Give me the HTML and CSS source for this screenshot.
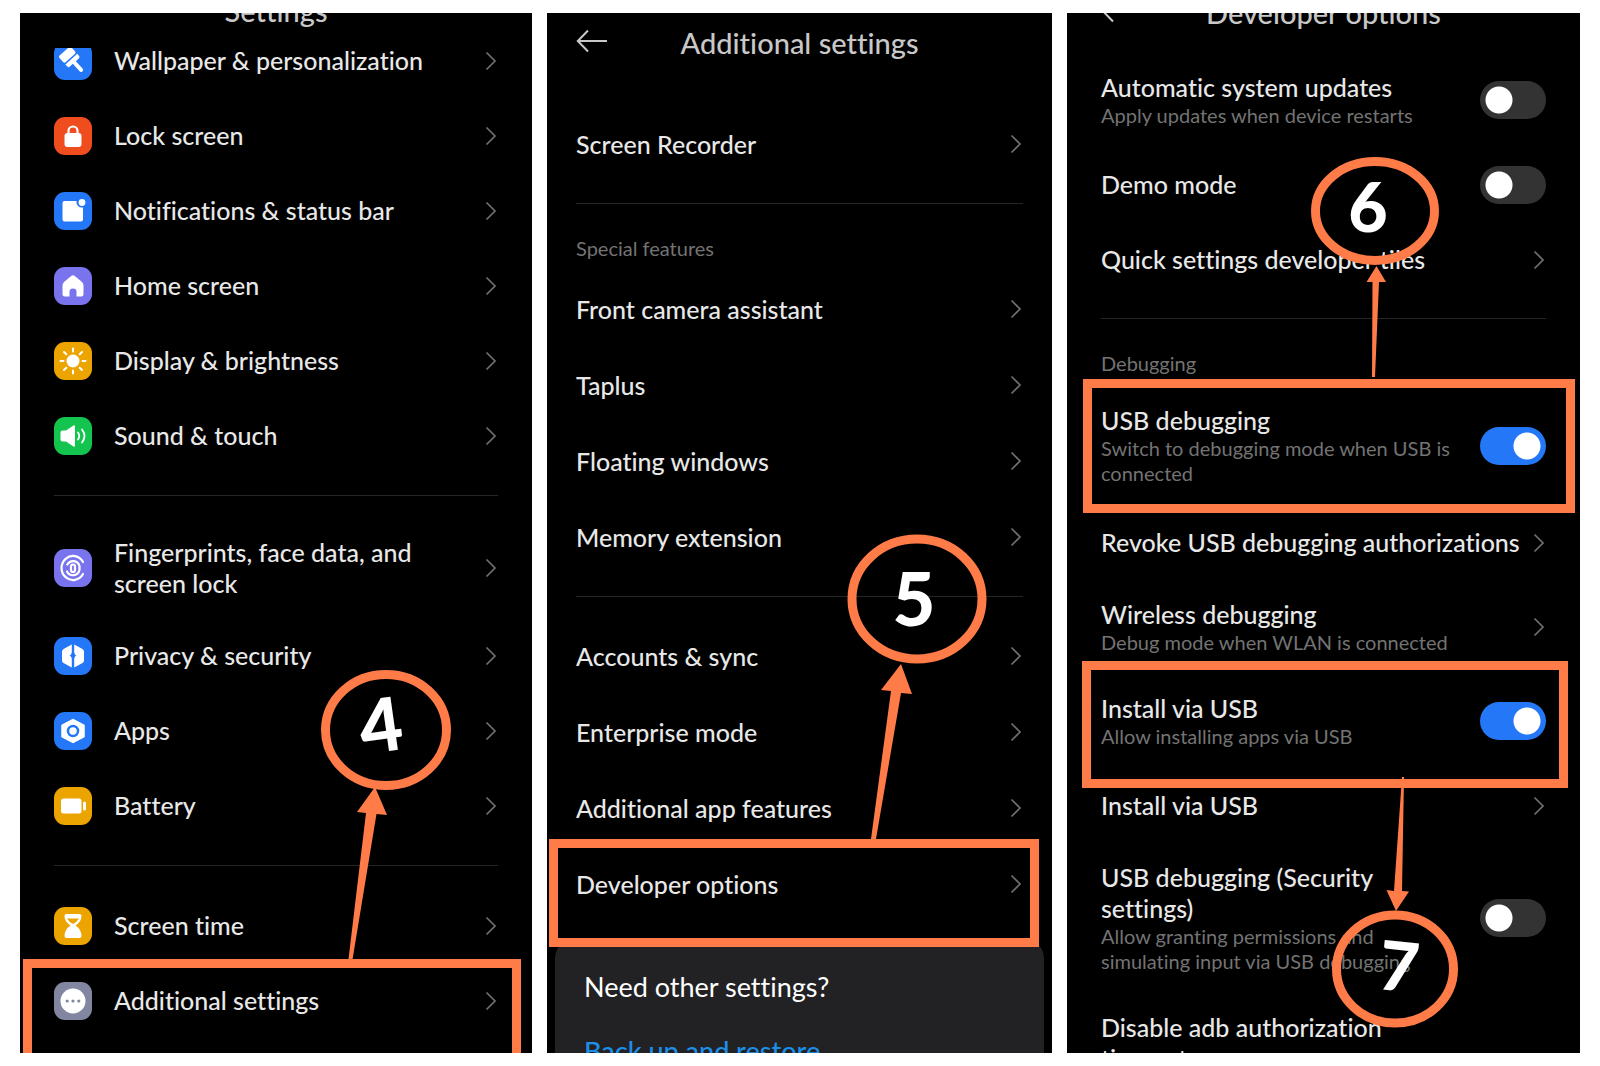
FILE: index.html
```html
<!DOCTYPE html>
<html lang="en">
<head>
<meta charset="utf-8">
<meta name="viewport" content="width=device-width, initial-scale=1">
<title>Enable USB debugging: steps 4 to 7</title>
<link rel="stylesheet" href="styles.css">
</head>
<body>
<svg class="defs" aria-hidden="true">
  <symbol id="chevron" viewBox="0 0 12 20"><path d="M1.5 1.5 10 10 1.5 18.5" fill="none" stroke="currentColor" stroke-width="1.7"/></symbol>
  <symbol id="back" viewBox="0 0 32 24"><path d="M31 12H2M12 1.500 1.800 12 12 22.500" fill="none" stroke="currentColor" stroke-width="2"/></symbol>
</svg>
<main class="board">

  <section class="phone phone-settings">
    <header class="bar"><h1 class="bar-title">Settings</h1></header>
    <nav class="list">
      <a class="row" href="#"><span class="icon blue"><svg viewBox="0 0 38 38"><g transform="translate(19 19) rotate(-42)" fill="#fff"><rect x="-8" y="-13" width="16" height="9" rx="2"/><path d="M-8-2.500H8V0Q8 2 6 2H2V12Q2 14 0 14T-2 12V2H-6Q-8 2-8 0Z"/></g></svg></span><span class="label">Wallpaper &amp; personalization</span><svg class="chevron"><use href="#chevron"/></svg></a>
      <a class="row" href="#"><span class="icon red"><svg viewBox="0 0 38 38"><rect x="10.500" y="16" width="17" height="14" rx="3" fill="#fff"/><path d="M14.500 17V14a4.500 4.500 0 0 1 9 0v3" fill="none" stroke="#fff" stroke-width="2.200"/></svg></span><span class="label">Lock screen</span><svg class="chevron"><use href="#chevron"/></svg></a>
      <a class="row" href="#"><span class="icon blue"><svg viewBox="0 0 38 38"><path d="M10.500 9H22.500A5.600 5.600 0 0 0 29 15.500V27.500Q29 29.500 27 29.500H10.500Q8.500 29.500 8.500 27.500V11Q8.500 9 10.500 9Z" fill="#fff"/><circle cx="28" cy="10.500" r="3.400" fill="#fff"/></svg></span><span class="label">Notifications &amp; status bar</span><svg class="chevron"><use href="#chevron"/></svg></a>
      <a class="row" href="#"><span class="icon violet"><svg viewBox="0 0 38 38"><path d="M17.500 8.700Q19 7.700 20.500 8.700L28 15Q29.500 16.500 29.500 18.500V27Q29.500 29.500 27 29.500H22.500V24.500Q22.500 21.500 19 21.500T15.500 24.500V29.500H11Q8.500 29.500 8.500 27V18.500Q8.500 16.500 10 15Z" fill="#fff"/></svg></span><span class="label">Home screen</span><svg class="chevron"><use href="#chevron"/></svg></a>
      <a class="row" href="#"><span class="icon amber"><svg viewBox="0 0 38 38"><circle cx="19" cy="19" r="6.500" fill="#fff"/><path d="M19 6.500V9.500M19 28.500V31.500M6.500 19H9.500M28.500 19H31.500M10 10 12.300 12.300M25.700 25.700 28 28M28 10 25.700 12.300M10 28 12.300 25.700" stroke="#fff" stroke-width="2" stroke-linecap="round"/></svg></span><span class="label">Display &amp; brightness</span><svg class="chevron"><use href="#chevron"/></svg></a>
      <a class="row" href="#"><span class="icon green"><svg viewBox="0 0 38 38"><path d="M6.500 15.500Q6.500 13.500 8.500 13.500H12L19.500 8.500Q21 7.800 21 9.500V28.500Q21 30.200 19.500 29.500L12 24.500H8.500Q6.500 24.500 6.500 22.500Z" fill="#fff"/><path d="M24 15.500Q26.500 19 24 22.500M28 12.500Q33 19 28 25.500" fill="none" stroke="#fff" stroke-width="1.800" stroke-linecap="round"/></svg></span><span class="label">Sound &amp; touch</span><svg class="chevron"><use href="#chevron"/></svg></a>
      <hr class="rule">
      <a class="row" href="#"><span class="icon violet"><svg viewBox="0 0 38 38" fill="none" stroke="#fff" stroke-width="2.200" stroke-linecap="round"><path d="M29 13A11.500 12 0 1 0 29 25"/><path d="M13.300 15.500A6.800 7.200 0 0 1 25.500 17V21A6.800 7.200 0 0 1 13 22.500"/><rect x="17" y="15.500" width="4" height="7.500" rx="2"/></svg></span><span class="label">Fingerprints, face data, and<br>screen lock</span><svg class="chevron"><use href="#chevron"/></svg></a>
      <a class="row" href="#"><span class="icon blue"><svg viewBox="0 0 38 38"><path d="M17.800 7.500V15.500Q17.300 18 15.500 18.500 17.300 19 17.800 21.500V30.500L9.500 26Q8 25 8 23.500V14.500Q8 13 9.500 12ZM20.200 7.500V15.500Q20.700 18 22.500 18.500 20.700 19 20.200 21.500V30.500L28.500 26Q30 25 30 23.500V14.500Q30 13 28.500 12Z" fill="#fff"/></svg></span><span class="label">Privacy &amp; security</span><svg class="chevron"><use href="#chevron"/></svg></a>
      <a class="row" href="#"><span class="icon blue"><svg viewBox="0 0 38 38"><path d="M19 8 29.500 13.500V24.500L19 30 8.500 24.500V13.500Z" fill="#fff" stroke="#fff" stroke-width="2.500" stroke-linejoin="round"/><circle cx="19" cy="19" r="5" fill="#fff" stroke="#2477f6" stroke-width="2.500"/></svg></span><span class="label">Apps</span><svg class="chevron"><use href="#chevron"/></svg></a>
      <a class="row" href="#"><span class="icon amber"><svg viewBox="0 0 38 38" fill="#fff"><rect x="7" y="11.500" width="20.500" height="15" rx="2.500"/><rect x="29" y="14.500" width="3" height="9" rx="1.500"/></svg></span><span class="label">Battery</span><svg class="chevron"><use href="#chevron"/></svg></a>
      <hr class="rule">
      <a class="row" href="#"><span class="icon amber"><svg viewBox="0 0 38 38" fill="#fff"><path fill-rule="evenodd" d="M12.500 7H25.500Q27.500 7 27.500 9 27.500 14.500 21.500 18.500 27.500 22.500 27.500 29 27.500 31 25.500 31H12.500Q10.500 31 10.500 29 10.500 22.500 16.500 18.500 10.500 14.500 10.500 9 10.500 7 12.500 7ZM13 11.500Q15 15 19 17 23 15 25 11.500Z"/></svg></span><span class="label">Screen time</span><svg class="chevron"><use href="#chevron"/></svg></a>
      <a class="row" href="#"><span class="icon slate"><svg viewBox="0 0 38 38"><circle cx="19" cy="19" r="12.500" fill="#fff"/><g fill="#8386a0"><circle cx="13.200" cy="19" r="1.600"/><circle cx="19" cy="19" r="1.600"/><circle cx="24.800" cy="19" r="1.600"/></g></svg></span><span class="label">Additional settings</span><svg class="chevron"><use href="#chevron"/></svg></a>
    </nav>
    <svg class="marks">
      <rect x="7.500" y="950.500" width="489" height="120"/>
      <ellipse cx="366" cy="717" rx="60.500" ry="55.500"/>
      <path d="M355 774 367 802 356.500 801 332.600 946H328.500L346 800 337 799Z"/>
      <text x="361" y="739" transform="rotate(-8 361 713)">4</text>
    </svg>
  </section>

  <section class="phone phone-additional">
    <header class="bar"><button class="back" type="button" aria-label="Back"><svg><use href="#back"/></svg></button><h1 class="bar-title">Additional settings</h1></header>
    <nav class="list">
      <a class="row" href="#"><span class="label">Screen Recorder</span><svg class="chevron"><use href="#chevron"/></svg></a>
      <hr class="rule">
      <h2 class="group">Special features</h2>
      <a class="row" href="#"><span class="label">Front camera assistant</span><svg class="chevron"><use href="#chevron"/></svg></a>
      <a class="row" href="#"><span class="label">Taplus</span><svg class="chevron"><use href="#chevron"/></svg></a>
      <a class="row" href="#"><span class="label">Floating windows</span><svg class="chevron"><use href="#chevron"/></svg></a>
      <a class="row" href="#"><span class="label">Memory extension</span><svg class="chevron"><use href="#chevron"/></svg></a>
      <hr class="rule">
      <a class="row" href="#"><span class="label">Accounts &amp; sync</span><svg class="chevron"><use href="#chevron"/></svg></a>
      <a class="row" href="#"><span class="label">Enterprise mode</span><svg class="chevron"><use href="#chevron"/></svg></a>
      <a class="row" href="#"><span class="label">Additional app features</span><svg class="chevron"><use href="#chevron"/></svg></a>
      <a class="row" href="#"><span class="label">Developer options</span><svg class="chevron"><use href="#chevron"/></svg></a>
    </nav>
    <aside class="card">
      <p class="card-title">Need other settings?</p>
      <a class="card-link" href="#">Back up and restore</a>
    </aside>
    <svg class="marks">
      <rect x="6.500" y="830.500" width="481" height="99"/>
      <ellipse cx="370" cy="586" rx="65" ry="60"/>
      <path d="M354 651 365 681 354 680 329 826H324L344 678 334 677Z"/>
      <text x="367" y="613">5</text>
    </svg>
  </section>

  <section class="phone phone-developer">
    <header class="bar"><button class="back" type="button" aria-label="Back"><svg><use href="#back"/></svg></button><h1 class="bar-title">Developer options</h1></header>
    <div class="list">
      <label class="row"><span class="label">Automatic system updates<small class="note">Apply updates when device restarts</small></span><input class="switch" type="checkbox"></label>
      <label class="row"><span class="label">Demo mode</span><input class="switch" type="checkbox"></label>
      <a class="row" href="#"><span class="label">Quick settings developer tiles</span><svg class="chevron"><use href="#chevron"/></svg></a>
      <hr class="rule">
      <h2 class="group">Debugging</h2>
      <label class="row"><span class="label">USB debugging<small class="note">Switch to debugging mode when USB is<br>connected</small></span><input class="switch" type="checkbox" checked></label>
      <a class="row" href="#"><span class="label">Revoke USB debugging authorizations</span><svg class="chevron"><use href="#chevron"/></svg></a>
      <a class="row" href="#"><span class="label">Wireless debugging<small class="note">Debug mode when WLAN is connected</small></span><svg class="chevron"><use href="#chevron"/></svg></a>
      <label class="row"><span class="label">Install via USB<small class="note">Allow installing apps via USB</small></span><input class="switch" type="checkbox" checked></label>
      <a class="row" href="#"><span class="label">Install via USB</span><svg class="chevron"><use href="#chevron"/></svg></a>
      <label class="row"><span class="label">USB debugging (Security<br>settings)<small class="note">Allow granting permissions and<br>simulating input via USB debugging</small></span><input class="switch" type="checkbox"></label>
      <a class="row" href="#"><span class="label">Disable adb authorization<br>timeout</span></a>
    </div>
    <svg class="marks">
      <rect x="20.500" y="370.500" width="483" height="125"/>
      <rect x="19.500" y="652.500" width="477" height="118"/>
      <ellipse cx="308" cy="198" rx="59.500" ry="49.500"/>
      <path d="M309.500 253 319 269H312L308 364H305L305.500 269H299.500Z"/>
      <text class="small" x="301" y="219">6</text>
      <path d="M335 764H337L335 878 342 878.500 329 898 319.500 877 327 878Z"/>
      <ellipse cx="328" cy="956" rx="58.500" ry="54"/>
      <text class="small" x="332" y="978" transform="rotate(6 332 954)">7</text>
    </svg>
  </section>
</main>
</body>
</html>
```
FILE: styles.css
```css
* { box-sizing: border-box; }

body {
  margin: 0;
  background: #fff;
  color: #e8e8e8;
  font-family: Lato, "Noto Sans", sans-serif;
  font-size: 25px;
  font-weight: 500;
  font-variant-ligatures: none;
  line-height: 31px;
}

.defs { display: none; }

.board {
  display: grid;
  grid-template-columns: 512fr 505fr 513fr;
  gap: 15px;
  height: 100vh;
  padding: 13px 20px;
}

.phone {
  --edge: 34px;
  --row: 75px;
  --rule: 21px;
  position: relative;
  display: flex;
  flex-direction: column;
  min-width: 0;
  overflow: hidden;
  background: #000;
}

.phone-settings { --rule: 22px; }
.phone-additional { --edge: 29px; --row: 76px; }

/* Title bar */
.bar {
  display: grid;
  grid-template-columns: 32px 1fr 32px;
  align-items: center;
  flex: none;
  height: 60px;
  padding: 0 var(--edge);
}

.phone-settings .bar { margin: -33px 0 8px; }
.phone-additional .bar { margin: -1px 0 34px; }
.phone-developer .bar { margin: -31px 0 11px; }

.bar-title {
  grid-column: 2;
  margin: 0;
  color: #c8c8c8;
  font-size: 29px;
  font-weight: 500;
  text-align: center;
}

.back {
  padding: 0 0 2px;
  border: 0;
  background: none;
  color: #c8c8c8;
}

.back svg { display: block; width: 32px; height: 24px; }

/* Rows */
.list {
  flex: none;
  padding: 0 var(--edge);
}

.phone-settings .list { overflow: hidden; }
.phone-settings .row:first-child { margin-top: -25px; }

.row {
  display: flex;
  align-items: center;
  gap: 22px;
  min-height: var(--row);
  color: inherit;
  text-decoration: none;
}

.label {
  flex: 1;
  padding: 19px 0;
  white-space: nowrap;
}

.note {
  display: block;
  color: #737373;
  font-size: 20px;
  font-weight: 400;
  line-height: 25px;
}

.chevron {
  flex: none;
  width: 12px;
  height: 20px;
  margin-right: 1px;
  color: #707070;
}

.phone-developer .chevron { margin-left: -22px; }

.rule {
  height: 1px;
  margin: var(--rule) 0;
  border: 0;
  background: #262626;
}

.group {
  margin: 0;
  color: #737373;
  font-size: 20px;
  font-weight: 400;
  line-height: 46px;
}

/* App icons */
.icon {
  flex: none;
  width: 38px;
  height: 38px;
  border-radius: 11px;
}

.icon svg { display: block; width: 38px; height: 38px; }

.blue { background: #2477f6; }
.red { background: #f04d1f; }
.violet { background: #7974ee; }
.amber { background: #eba400; }
.green { background: #13c54e; }
.slate { background: #8386a0; }

/* Switches */
.switch {
  flex: none;
  width: 66px;
  height: 38px;
  margin: 0;
  border-radius: 19px;
  appearance: none;
  background: radial-gradient(circle at 19px 19px, #fff 13px, #333 14px);
}

.switch:checked { background: radial-gradient(circle at 47px 19px, #fff 13px, #2477f6 14px); }

/* Help card */
.card {
  flex: none;
  margin: 18px 8px 0;
  padding: 31px 29px;
  border-radius: 18px;
  background: #222224;
  color: #fff;
  font-size: 27px;
  font-weight: 400;
}

.card-title { margin: 0 0 33px; }
.card-link { color: #1c8fe8; font-weight: 500; text-decoration: none; }

/* Drawn-on step marks */
.marks {
  position: absolute;
  inset: 0;
  width: 100%;
  height: 100%;
  pointer-events: none;
}

.marks rect, .marks ellipse { fill: none; stroke: #ff7b47; stroke-width: 9px; }
.marks path { fill: #ff7b47; }

.marks text {
  fill: #fff;
  font-size: 74px;
  font-weight: 900;
  text-anchor: middle;
}

.marks .small { font-size: 68px; }
```
